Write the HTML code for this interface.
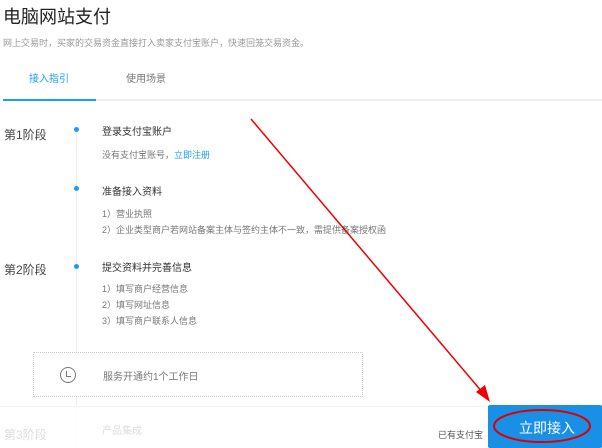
<!DOCTYPE html>
<html><head><meta charset="utf-8"><style>
*{margin:0;padding:0;box-sizing:border-box}
body{width:602px;height:448px;overflow:hidden;background:#fff;font-family:"Liberation Sans","Noto Sans CJK SC",sans-serif;position:relative;color:#333}
.a{position:absolute;white-space:nowrap}
.dot{position:absolute;left:74px;width:5px;height:5px;border-radius:50%;background:#1a9ff0}
.s{font-size:9px;color:#777}
</style></head><body>
<div class="a" style="left:3px;top:3px;font-size:18px;color:#222">电脑网站支付</div>
<div class="a" style="left:3px;top:36px;font-size:9px;color:#999">网上交易时，买家的交易资金直接打入卖家支付宝账户，快速回笼交易资金。</div>
<div class="a" style="left:29px;top:70px;font-size:10px;color:#1a9ff0">接入指引</div>
<div class="a" style="left:126px;top:70px;font-size:10px;color:#777">使用场景</div>
<div class="a" style="left:3px;top:99px;width:599px;height:2px;background:#eee"></div>
<div class="a" style="left:3px;top:99px;width:93px;height:2px;background:#1a9ff0"></div>
<div class="a" style="left:76px;top:128px;width:1px;height:320px;background:#eee"></div>
<div class="a" style="left:4px;top:126px;font-size:12px;color:#444">第1阶段</div>
<div class="a" style="left:4px;top:261px;font-size:12px;color:#444">第2阶段</div>
<div class="dot" style="top:127px"></div>
<div class="dot" style="top:186px"></div>
<div class="dot" style="top:264px"></div>
<div class="a" style="left:102px;top:123px;font-size:10px;color:#333">登录支付宝账户</div>
<div class="a s" style="left:102px;top:148px">没有支付宝账号，<span style="color:#1a9ff0">立即注册</span></div>
<div class="a" style="left:102px;top:183px;font-size:10px;color:#333">准备接入资料</div>
<div class="a s" style="left:102px;top:207px">1）营业执照</div>
<div class="a s" style="left:102px;top:223px">2）企业类型商户若网站备案主体与签约主体不一致，需提供备案授权函</div>
<div class="a" style="left:102px;top:259px;font-size:10px;color:#333">提交资料并完善信息</div>
<div class="a s" style="left:102px;top:282px">1）填写商户经营信息</div>
<div class="a s" style="left:102px;top:298px">2）填写网址信息</div>
<div class="a s" style="left:102px;top:314px">3）填写商户联系人信息</div>
<div class="a" style="left:33px;top:352px;width:330px;height:45px;border:1px dotted #ccc;background:#fff"></div>
<div class="a" style="left:60px;top:367px;width:16px;height:16px;border:1.5px solid #777;border-radius:50%"></div>
<div class="a" style="left:66px;top:371px;width:5px;height:6px;border-left:1.5px solid #777;border-bottom:1.5px solid #777"></div>
<div class="a" style="left:103px;top:368px;font-size:10px;color:#777">服务开通约1个工作日</div>
<div class="a" style="left:0;top:406px;width:602px;height:42px;background:rgba(255,255,255,0.85);border-top:1px solid #f3f3f3"></div>
<div class="a" style="left:4px;top:426px;font-size:12px;color:#ddd">第3阶段</div>
<div class="a" style="left:102px;top:422px;font-size:10px;color:#ddd">产品集成</div>
<div class="a" style="left:438px;top:428px;font-size:9px;color:#555;width:50px;overflow:hidden">已有支付宝</div>
<div class="a" style="left:488px;top:405px;width:114px;height:43px;background:#1a8fe6;border-radius:2px"></div>
<div class="a" style="left:519px;top:418px;font-size:14px;color:#fff">立即接入</div>
<svg class="a" style="left:0;top:0" width="602" height="448">
<line x1="251" y1="119" x2="483" y2="393" stroke="#e00" stroke-width="1.5"/>
<polygon points="490,402 476,392 485,385" fill="#e00"/>
<ellipse cx="542" cy="426" rx="48" ry="16" fill="none" stroke="#d00" stroke-width="2"/>
</svg>
</body></html>
